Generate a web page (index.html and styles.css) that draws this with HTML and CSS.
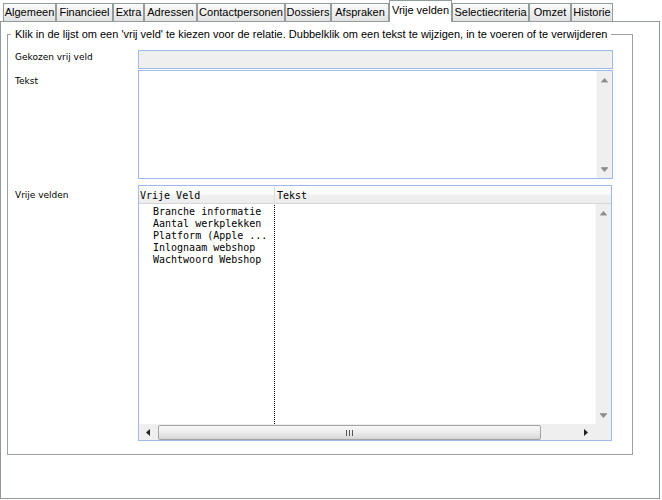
FILE: index.html
```html
<!DOCTYPE html>
<html>
<head>
<meta charset="utf-8">
<link rel="stylesheet" href="styles.css">
</head>
<body>
<div class="window">
  <div class="tabs">
    <div class="tab tab-algemeen">Algemeen</div>
    <div class="tab tab-financieel">Financieel</div>
    <div class="tab tab-extra">Extra</div>
    <div class="tab tab-adressen">Adressen</div>
    <div class="tab tab-contact">Contactpersonen</div>
    <div class="tab tab-dossiers">Dossiers</div>
    <div class="tab tab-afspraken">Afspraken</div>
    <div class="tab active tab-vrij">Vrije velden</div>
    <div class="tab tab-selectie">Selectiecriteria</div>
    <div class="tab tab-omzet">Omzet</div>
    <div class="tab tab-historie">Historie</div>
  </div>
  <div class="panel">
    <fieldset class="group">
      <legend>Klik in de lijst om een 'vrij veld' te kiezen voor de relatie. Dubbelklik om een tekst te wijzigen, in te voeren of te verwijderen</legend>
      <div class="form">
        <div class="label label-gekozen">Gekozen vrij veld</div>
        <div class="input"></div>

        <div class="label label-tekst">Tekst</div>
        <div class="textarea">
          <div class="ta-body"></div>
          <div class="vscroll ta-scroll">
            <svg class="arrow" width="7" height="5" viewBox="0 0 7 5"><polygon points="0,4 3.5,0 7,4" fill="#8d8d8d"/><rect x="0" y="4" width="7" height="1" fill="#c4c4c4"/></svg>
            <svg class="arrow" width="7" height="5" viewBox="0 0 7 5"><rect x="0" y="0" width="7" height="1" fill="#a0a0a0"/><polygon points="0,1 7,1 3.5,5" fill="#8d8d8d"/></svg>
          </div>
        </div>

        <div class="label label-lijst">Vrije velden</div>
        <div class="list">
          <div class="list-head">
            <div class="head-col col1">Vrije Veld</div>
            <div class="head-col col2">Tekst</div>
          </div>
          <div class="list-main">
            <div class="list-cols">
              <div class="col1 items">
                <div class="item">Branche informatie</div>
                <div class="item">Aantal werkplekken</div>
                <div class="item">Platform (Apple ...</div>
                <div class="item">Inlognaam webshop</div>
                <div class="item">Wachtwoord Webshop</div>
              </div>
              <div class="col2 values"></div>
            </div>
            <div class="vscroll list-scroll">
              <svg class="arrow" width="7" height="5" viewBox="0 0 7 5"><polygon points="0,4 3.5,0 7,4" fill="#8d8d8d"/><rect x="0" y="4" width="7" height="1" fill="#c4c4c4"/></svg>
              <svg class="arrow" width="7" height="5" viewBox="0 0 7 5"><rect x="0" y="0" width="7" height="1" fill="#a0a0a0"/><polygon points="0,1 7,1 3.5,5" fill="#8d8d8d"/></svg>
            </div>
          </div>
          <div class="hscroll">
            <div class="hbtn">
              <svg width="4" height="7" viewBox="0 0 4 7"><polygon points="4,0 0,3.5 4,7" fill="#222"/></svg>
            </div>
            <div class="thumb">
              <svg width="7" height="6" viewBox="0 0 7 6"><rect x="0" y="0" width="1" height="6" fill="#555"/><rect x="3" y="0" width="1" height="6" fill="#555"/><rect x="6" y="0" width="1" height="6" fill="#555"/></svg>
            </div>
            <div class="track"></div>
            <div class="hbtn">
              <svg width="4" height="7" viewBox="0 0 4 7"><polygon points="0,0 4,3.5 0,7" fill="#222"/></svg>
            </div>
            <div class="corner"></div>
          </div>
        </div>
      </div>
    </fieldset>
  </div>
</div>
</body>
</html>
```

FILE: styles.css
```css
* { box-sizing: border-box; }

html, body {
  margin: 0;
  padding: 0;
  background: #ffffff;
}

body {
  width: 662px;
  height: 500px;
  font-family: "Liberation Sans", Arial, sans-serif;
  font-size: 11px;
  color: #000;
}

.window {
  width: 662px;
}

.tabs {
  display: flex;
  align-items: flex-end;
  height: 21px;
  padding-left: 3px;
  position: relative;
  z-index: 2;
}

.tab {
  height: 18px;
  padding: 0;
  border: 1px solid #919b9c;
  border-bottom: none;
  background: linear-gradient(#fbfbfb, #ececec 60%, #e2e2e2);
  line-height: 16px;
  white-space: nowrap;
  text-align: center;
  flex: none;
  overflow: hidden;
}

.tab-algemeen { width: 53px; }
.tab-financieel { width: 57px; }
.tab-extra { width: 31px; }
.tab-adressen { width: 53px; }
.tab-contact { width: 88px; }
.tab-dossiers { width: 46px; }
.tab-afspraken { width: 58px; }
.tab-vrij { width: 63px; }
.tab-selectie { width: 77px; }
.tab-omzet { width: 42px; }
.tab-historie { width: 42px; }

.tab.active {
  height: 22px;
  margin-bottom: -1px;
  background: #ffffff;
  line-height: 19px;
}

.panel {
  width: 660px;
  height: 478px;
  border: 1px solid #919b9c;
  background: #ffffff;
  padding-top: 6px;
  padding-left: 6px;
}

.group {
  width: 626px;
  margin: 0;
  padding: 9px 0 13px 7px;
  border: 1px solid #a0a0a0;
  min-width: 0;
}

.group legend {
  font-family: "Liberation Sans", Arial, sans-serif;
  font-size: 11px;
  line-height: 13px;
  padding: 0 4px;
  margin-left: -4px;
  white-space: nowrap;
}

.form {
  display: grid;
  grid-template-columns: 123px 475px;
  align-items: start;
}

.label {
  font-family: "DejaVu Sans", sans-serif;
  font-size: 9px;
  line-height: 11px;
}

.label-gekozen { padding-top: 2px; }
.label-tekst { padding-top: 7px; }
.label-lijst { padding-top: 11px; }

.input {
  height: 19px;
  border: 1px solid #9dbaea;
  background: #efefef;
}

.textarea {
  margin-top: 1px;
  height: 109px;
  border: 1px solid #9dbaea;
  background: #ffffff;
  display: flex;
}

.ta-body {
  flex: 1;
}

.vscroll {
  width: 16px;
  background: #efefef;
  border-left: 1px solid #f6f6f6;
  display: flex;
  flex-direction: column;
  align-items: center;
  justify-content: space-between;
}

.ta-scroll {
  padding: 7px 0 6px;
}

.arrow { display: block; }

.list {
  margin-top: 6px;
  width: 474px;
  height: 256px;
  border: 1px solid #9dbaea;
  display: flex;
  flex-direction: column;
  font-family: "DejaVu Sans Mono", monospace;
  font-size: 10px;
}

.list-head {
  height: 18px;
  display: flex;
  background: linear-gradient(#ffffff, #fcfcfc 45%, #f0f0f0 55%, #ececec);
  border-bottom: 1px solid #d6d6d6;
  line-height: 17px;
  padding-top: 1px;
}

.col1 {
  width: 135px;
  flex: none;
}

.col2 {
  flex: 1;
}

.head-col.col1 {
  padding-left: 1px;
}

.head-col.col2 {
  border-left: 1px solid #dcdcdc;
  margin-top: -1px;
  padding-top: 1px;
  padding-left: 2px;
}

.list-main {
  height: 220px;
  display: flex;
}

.list-cols {
  flex: 1;
  display: flex;
  background: #ffffff;
}

.items {
  padding: 2px 0 0 14px;
}

.item {
  line-height: 12px;
  white-space: nowrap;
}

.values {
  margin-top: 1px;
  border-left: 1px dotted #000000;
}

.list-scroll {
  padding: 7px 0 6px;
}

.hscroll {
  height: 16px;
  display: flex;
  align-items: center;
  background: #efefef;
}

.hbtn {
  width: 18px;
  height: 16px;
  flex: none;
  display: flex;
  align-items: center;
  justify-content: center;
}

.thumb {
  width: 383px;
  height: 15px;
  margin-left: 1px;
  margin-top: 1px;
  border: 1px solid #a3a3a3;
  border-radius: 2px;
  background: linear-gradient(#f8f8f8, #ececec 50%, #d6d6d6);
  display: flex;
  align-items: center;
  justify-content: center;
  flex: none;
}

.thumb svg { display: block; }

.track {
  flex: 1;
}

.corner {
  width: 16px;
  height: 16px;
  flex: none;
  background: #efefef;
}
```
